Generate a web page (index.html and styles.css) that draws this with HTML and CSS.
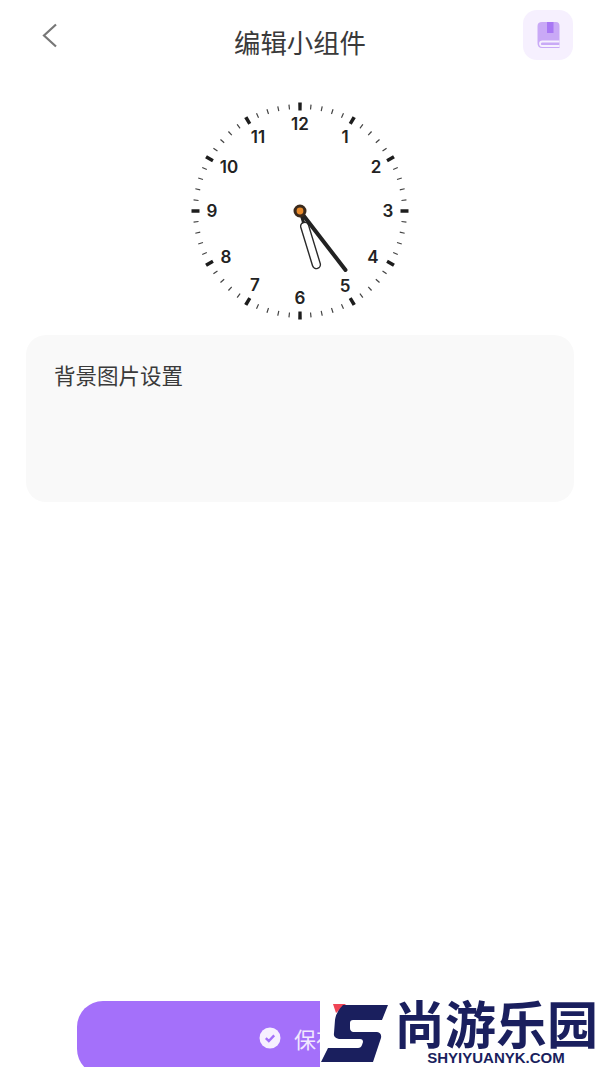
FILE: index.html
```html
<!DOCTYPE html>
<html lang="zh-CN">
	<head>
		<meta charset="utf-8">
		<title>编辑小组件</title>
		<link rel="stylesheet" href="styles.css">
	</head>
	<body>
		<div class="page">
			<div class="header">
				<svg class="back" width="16" height="25" viewBox="0 0 16 25">
					<polyline points="14,1.5 2,12.5 14,23.5"></polyline>
				</svg>
				<div class="title">编辑小组件</div>
				<div class="book">
					<svg width="23" height="28" viewBox="0 0 23 28">
						<path class="book_cover" d="M5 1H19Q22.5 1 22.5 5V27H5Q.5 27 .5 22V5Q.5 1 5 1Z"></path>
						<rect class="book_mark" x="10" y="1" width="6.5" height="11"></rect>
						<path class="book_page" d="M22.5 20.5H5.5Q3 20.5 3 22.8T5.5 25H22.5"></path>
					</svg>
				</div>
			</div>

			<svg class="clock" width="220" height="220" viewBox="0 0 220 220">
				<circle class="tick_minor" cx="110" cy="110" r="104.5" pathLength="60"></circle>
				<circle class="tick_major" cx="110" cy="110" r="104.5" pathLength="12"></circle>
				<text x="110" y="29">12</text>
				<text x="155" y="42">1</text>
				<text x="186" y="72">2</text>
				<text x="198" y="116">3</text>
				<text x="183" y="162">4</text>
				<text x="155" y="191">5</text>
				<text x="110" y="203">6</text>
				<text x="65" y="190">7</text>
				<text x="36" y="162">8</text>
				<text x="22" y="116">9</text>
				<text x="39" y="72">10</text>
				<text x="68" y="42">11</text>
				<line class="hand_link" x1="110" y1="110" x2="114" y2="123"></line>
				<rect class="hand_hour" x="-4" y="12" width="8" height="48" rx="4" transform="translate(110 110) rotate(-17)"></rect>
				<line class="hand_minute" x1="110" y1="110" x2="155.5" y2="169"></line>
				<circle class="pin_outer" cx="110" cy="110" r="5"></circle>
				<circle class="pin_inner" cx="110" cy="110" r="3.4"></circle>
			</svg>

			<div class="card">
				<div class="card_title">背景图片设置</div>
			</div>

			<div class="save">
				<svg width="22" height="22" viewBox="0 0 22 22">
					<circle class="save_disc" cx="11" cy="11" r="10.5"></circle>
					<polyline class="save_tick" points="6.8,11.2 9.8,14 15.2,8.4"></polyline>
				</svg>
				<span>保存</span>
			</div>

			<div class="mark">
				<svg class="mark_s" width="70" height="62" viewBox="0 0 70 62">
					<polygon class="mark_red" points="13,2 26,2 16,11"></polygon>
					<path class="mark_blue" d="M23 3H68L62 18H33Q30 18 30 21V26Q30 29 33 30H57Q62 31 61 36L53 60H1L8 46H38Q41 46 42 43L43 40Q43 37 40 37H19Q13 36 14 31L15 18Q16 10 23 3Z"></path>
				</svg>
				<div class="mark_text">
					<div class="mark_name">尚游乐园</div>
					<div class="mark_url">SHYIYUANYK.COM</div>
				</div>
			</div>
		</div>
	</body>
</html>
```

FILE: styles.css
```css
html,body{
	margin:0;
	padding:0;
	background:#fff;
}
.page{
	position:relative;
	display:flex;
	flex-direction:column;
	width:600px;
	height:1067px;
	overflow:hidden;
	font-family:"Noto Sans CJK SC","Noto Sans",sans-serif;
	color:#333;
}
.header{
	display:grid;
	grid-template-columns:1fr auto 1fr;
	height:60px;
	padding:10px 27px 0;
}
.back{
	margin:13px 0 0 15px;
}
.back polyline{
	fill:none;
	stroke:#777;
	stroke-width:2.2;
}
.title{
	font-size:26.4px;
	line-height:64px;
	color:#3a3a3a;
}
.book{
	display:flex;
	align-items:center;
	justify-content:center;
	justify-self:end;
	width:50px;
	height:50px;
	border-radius:14px;
	background:#f6f0fe;
}
.book_cover{
	fill:#c9a9f6;
}
.book_mark{
	fill:#a877f4;
}
.book_page{
	fill:none;
	stroke:#f6f0fe;
	stroke-width:1.8;
}
.clock{
	align-self:center;
	margin-top:31px;
}
.clock text{
	font-family:"Inter","Liberation Sans",sans-serif;
	font-size:17px;
	font-weight:600;
	text-anchor:middle;
	fill:#222;
}
.tick_minor,.tick_major{
	fill:none;
	stroke:#444;
}
.tick_minor{
	stroke-width:5;
	stroke-dasharray:0.11 0.89;
	stroke-dashoffset:0.055;
}
.tick_major{
	stroke:#1d1d1d;
	stroke-width:8;
	stroke-dasharray:0.064 0.936;
	stroke-dashoffset:0.032;
}
.hand_link,.hand_minute{
	stroke:#222;
	stroke-linecap:round;
}
.hand_link{
	stroke-width:3;
}
.hand_minute{
	stroke-width:4;
}
.hand_hour{
	fill:#fff;
	stroke:#2a2a2a;
	stroke-width:1.4;
}
.pin_outer{
	fill:#3b2a1c;
	stroke:#3b2a1c;
	stroke-width:3;
}
.pin_inner{
	fill:#e78a2c;
}
.card{
	box-sizing:border-box;
	height:167px;
	margin:14px 26px 0;
	padding:26px 28px;
	border-radius:20px;
	background:#f9f9f9;
}
.card_title{
	font-size:21.5px;
	line-height:28px;
	color:#3a3a3a;
}
.save{
	display:flex;
	align-items:center;
	justify-content:center;
	gap:13px;
	flex-shrink:0;
	height:74px;
	margin:auto 77px -8px;
	border-radius:26px;
	background:#a470fa;
	color:#f1e8ff;
	font-size:22px;
}
.save svg{
	margin-left:-3px;
}
.save_disc{
	fill:#f6f0ff;
}
.save_tick{
	fill:none;
	stroke:#a470fa;
	stroke-width:2.4;
}
.mark{
	position:absolute;
	right:0;
	bottom:0;
	display:flex;
	align-items:flex-start;
	gap:4px;
	box-sizing:border-box;
	width:280px;
	height:67px;
	background:#fff;
}
.mark_s{
	margin-top:2px;
}
.mark_red{
	fill:#ef4455;
}
.mark_blue{
	fill:#1a1f5e;
}
.mark_text{
	color:#1a1f5e;
	text-align:center;
}
.mark_name{
	margin:-3px 0 2px;
	font-size:51px;
	line-height:51px;
	font-weight:700;
	white-space:nowrap;
}
.mark_url{
	font-family:"Liberation Sans",Arial,sans-serif;
	font-size:15px;
	line-height:16px;
	font-weight:700;
}
```
